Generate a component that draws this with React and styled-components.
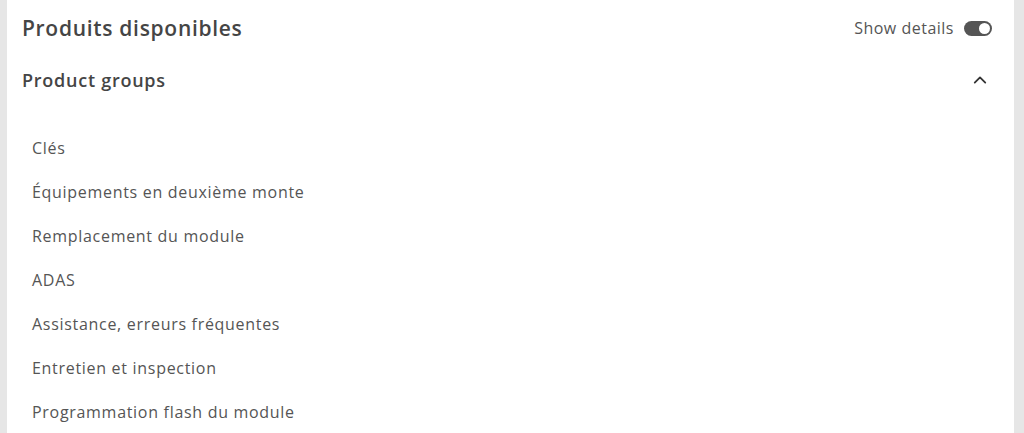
import React from "react"
import styled, { createGlobalStyle } from "styled-components"

const GlobalStyle = createGlobalStyle`
  html, body {
    margin: 0;
    padding: 0;
    background: #e6e6e6;
    font-family: "Open Sans", "Liberation Sans", sans-serif;
  }
`

const groups = [
  "Clés",
  "Équipements en deuxième monte",
  "Remplacement du module",
  "ADAS",
  "Assistance, erreurs fréquentes",
  "Entretien et inspection",
  "Programmation flash du module",
]

const App = () => {
  return (
    <>
      <GlobalStyle />
      <Page>
        <Card>
          <Header>
            <Title>Produits disponibles</Title>
            <Details>
              <span>Show details</span>
              <Toggle $on />
            </Details>
          </Header>
          <GroupHeader>
            <h3>Product groups</h3>
            <svg width="18" height="18" viewBox="0 0 24 24" fill="none" stroke="#333" strokeWidth="2.4" strokeLinecap="round" strokeLinejoin="round">
              <path d="M5 15.5l7-7 7 7" />
            </svg>
          </GroupHeader>
          <List>
            {groups.map((g) => (
              <Item key={g}>{g}</Item>
            ))}
          </List>
        </Card>
      </Page>
    </>
  )
}

const Page = styled.div`
  padding: 0 10px 0 7px;
  height: 433px;
  overflow: hidden;
`

const Card = styled.div`
  background: #fff;
  padding: 0 22px 0 15px;
  min-height: 100%;
`

const Header = styled.div`
  height: 56px;
  display: flex;
  align-items: center;
  justify-content: space-between;
`

const Title = styled.h2`
  margin: 0;
  font-size: 21px;
  font-weight: 600;
  letter-spacing: 0.7px;
  color: #454545;
`

const Details = styled.div`
  display: flex;
  align-items: center;
  gap: 10px;
  font-size: 16px;
  letter-spacing: 0.5px;
  color: #555;
`

const Toggle = styled.div`
  width: 28px;
  height: 15px;
  border-radius: 8px;
  background: ${(p) => (p.$on ? "#555" : "#ccc")};
  position: relative;

  &::after {
    content: "";
    position: absolute;
    top: 2px;
    left: ${(p) => (p.$on ? "15px" : "2px")};
    width: 11px;
    height: 11px;
    border-radius: 50%;
    background: #fff;
  }
`

const GroupHeader = styled.div`
  height: 48px;
  display: flex;
  align-items: center;
  justify-content: space-between;
  padding-right: 3px;

  h3 {
    margin: 0;
    font-size: 18px;
    font-weight: 600;
    letter-spacing: 0.75px;
    color: #454545;
  }
`

const List = styled.ul`
  list-style: none;
  margin: 0;
  padding: 22px 0 0 10px;
`

const Item = styled.li`
  height: 44px;
  display: flex;
  align-items: center;
  font-size: 16px;
  letter-spacing: 0.7px;
  color: #555;
`

export default App
